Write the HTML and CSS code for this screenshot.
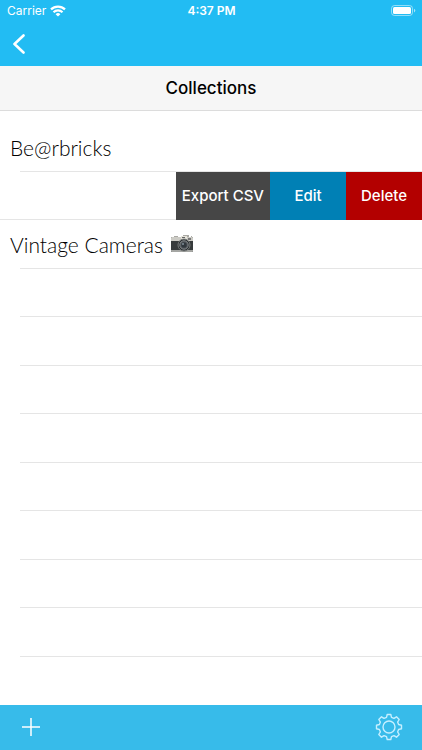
FILE: index.html
```html
<!DOCTYPE html>
<html lang="en">
<head>
<meta charset="utf-8">
<meta name="viewport" content="width=device-width, initial-scale=1">
<title>Collections</title>
<link rel="stylesheet" href="styles.css">
</head>
<body>
<header class="top">
  <div class="status">
    <div class="carrier">
      <span>Carrier</span>
      <svg width="16" height="12" viewBox="0 0 16 12" fill="none" stroke="currentColor" stroke-width="2.2" aria-hidden="true">
        <path d="M1 4.4a10 10 0 0 1 14 0"/>
        <path d="M3.5 7.2a6.4 6.4 0 0 1 9 0"/>
        <path d="M8 11.6 5.6 9.2a3.4 3.4 0 0 1 4.8 0Z" fill="currentColor" stroke="none"/>
      </svg>
    </div>
    <time class="time">4:37 PM</time>
    <svg class="battery" width="25" height="12" viewBox="0 0 25 12" aria-hidden="true">
      <rect x=".5" y=".5" width="21" height="10" rx="3" fill="none" stroke="#fff" stroke-opacity=".5"/>
      <rect x="2" y="2" width="18" height="7" rx="1.5" fill="#fff"/>
      <path d="M23 3.8v3.6q1.3-.6 1.3-1.8T23 3.8Z" fill="#fff" fill-opacity=".6"/>
    </svg>
  </div>
  <nav class="nav">
    <button class="icon-button" type="button" aria-label="Back">
      <svg width="14" height="20" viewBox="0 0 14 20" fill="none" stroke="currentColor" stroke-width="2.6" stroke-linecap="round" stroke-linejoin="round"><path d="M11.5 1.5 2.5 10l9 8.5"/></svg>
    </button>
  </nav>
</header>
<h1 class="title">Collections</h1>
<main class="main">
  <ul class="list">
    <li class="row">Be@rbricks</li>
    <li class="row swiped">
      <button class="action export" type="button">Export CSV</button>
      <button class="action edit" type="button">Edit</button>
      <button class="action delete" type="button">Delete</button>
    </li>
    <li class="row">Vintage Cameras
      <svg class="camera" width="24" height="20" viewBox="0 0 24 20" role="img" aria-label="camera">
        <path d="M4 2h4v1h5V1h6v2h2V2h1v3H2V3h2Z" fill="#aaa9a4"/>
        <rect x="1" y="3" width="22" height="15" rx="1" fill="#373b3c"/>
        <path d="M1 4q0-1 1-1h20q1 0 1 1v3H1Z" fill="#cccbc5"/>
        <path d="M1 16h22v1q0 1-1 1H2q-1 0-1-1Z" fill="#a5a6a3"/>
        <rect x="11" y="2" width="6" height="3" fill="#e5e3da"/>
        <rect x="12" y="3" width="3" height="1" fill="#666"/>
        <rect x="18" y="4" width="3" height="2" fill="#777"/>
        <circle cx="14" cy="11" r="6" fill="#292d30" stroke="#777b7a"/>
        <circle cx="14" cy="11" r="4.2" fill="#4b5055" stroke="#858a8c"/>
        <circle cx="14" cy="11" r="2.6" fill="#30373d"/>
        <circle cx="13" cy="10" r="1" fill="#82909a"/>
      </svg>
    </li>
    <li class="row"></li>
    <li class="row"></li>
    <li class="row"></li>
    <li class="row"></li>
    <li class="row"></li>
    <li class="row"></li>
    <li class="row"></li>
    <li class="row"></li>
    <li class="row"></li>
  </ul>
</main>
<footer class="toolbar">
  <button class="icon-button" type="button" aria-label="Add collection">
    <svg width="18" height="18" viewBox="0 0 18 18" fill="none" stroke="currentColor" stroke-width="1.5"><path d="M9 0v18M0 9h18"/></svg>
  </button>
  <button class="icon-button settings" type="button" aria-label="Settings">
    <svg width="28" height="28" viewBox="-14 -14 28 28" fill="none" stroke="currentColor" stroke-width="1.4" stroke-linejoin="round">
      <path d="M-1.8-12.5H1.8L2.5-9.6 4.95-8.6 7.5-10.2 10.2-7.5 8.6-4.95 9.6-2.5 12.5-1.8V1.8L9.6 2.5 8.6 4.95 10.2 7.5 7.5 10.2 4.95 8.6 2.5 9.6 1.8 12.5H-1.8L-2.5 9.6-4.95 8.6-7.5 10.2-10.2 7.5-8.6 4.95-9.6 2.5-12.5 1.8V-1.8L-9.6-2.5-8.6-4.95-10.2-7.5-7.5-10.2-4.95-8.6-2.5-9.6Z"/>
      <circle r="6"/>
    </svg>
  </button>
</footer>
</body>
</html>
```
FILE: styles.css
```css
* {
  box-sizing: border-box;
}

body {
  margin: 0;
  min-height: 100vh;
  display: flex;
  flex-direction: column;
  background: #fff;
  color: #000;
  font-family: Inter, "Liberation Sans", sans-serif;
}

button {
  border: 0;
  padding: 0;
  color: #fff;
  font: inherit;
}

svg {
  display: block;
}

.top {
  background: #22bcf3;
  color: #fff;
}

.status {
  display: grid;
  grid-template-columns: 1fr auto 1fr;
  align-items: center;
  height: 21px;
  padding: 0 6px 0 7px;
  font-size: 12px;
}

.carrier {
  display: flex;
  align-items: center;
  gap: 4px;
}

.time {
  font-weight: 600;
}

.battery {
  justify-self: end;
}

.nav {
  display: flex;
  align-items: center;
  height: 45px;
  padding: 0 12px;
}

.icon-button {
  display: flex;
  background: none;
}

.title {
  display: flex;
  align-items: center;
  justify-content: center;
  height: 45px;
  margin: 0;
  border-bottom: 1px solid #dcdcdc;
  background: #f6f6f6;
  font-size: 17px;
  font-weight: 500;
}

.main {
  flex: 1;
  display: flex;
  padding-top: 12px;
}

.list {
  flex: 1;
  display: grid;
  grid-auto-rows: 1fr;
  margin: 0;
  padding: 0;
  list-style: none;
  font-family: Lato, "Liberation Sans", sans-serif;
  font-size: 21px;
  font-weight: 300;
}

.row {
  display: flex;
  align-items: center;
  gap: 7px;
  min-height: 44px;
  padding-left: 10px;
  background: linear-gradient(#e5e5e5, #e5e5e5) 20px 100% / 100% 1px no-repeat;
}

.row:last-child {
  background: none;
}

.swiped {
  align-items: stretch;
  justify-content: flex-end;
  gap: 0;
  padding-left: 0;
  background-position: 0 100%;
}

.action {
  min-width: 76px;
  padding: 0 6px;
  font-family: Inter, "Liberation Sans", sans-serif;
  font-size: 15px;
  font-weight: 500;
}

.export {
  background: #464646;
}

.edit {
  background: #0080b5;
}

.delete {
  background: #b30000;
}

.toolbar {
  display: flex;
  align-items: center;
  justify-content: space-between;
  height: 45px;
  padding: 0 19px 2px 22px;
  background: #37bbea;
  color: #fff;
}

.settings {
  color: #c5efff;
}
```
